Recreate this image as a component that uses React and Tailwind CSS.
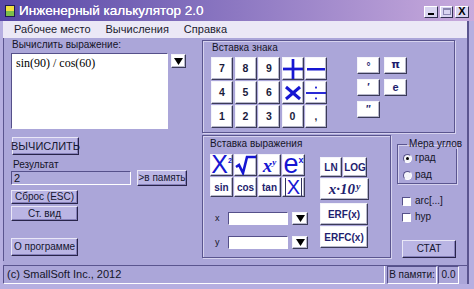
import React from "react";

const F = "font-['Liberation_Sans',Arial,sans-serif]";
const KEY =
  "flex items-center justify-center bg-white border border-t-[#f4f4fa] border-l-[#f4f4fa] border-r-[#3a3a58] border-b-[#3a3a58] shadow-[inset_-1px_-1px_0_#b8b8cc]";
const BTN =
  "flex items-center justify-center bg-[#bab5e4] border border-t-[#e9e7f7] border-l-[#e9e7f7] border-r-[#28244a] border-b-[#28244a] shadow-[inset_-1px_-1px_0_#8680ba] text-[10px] text-[#151530] leading-none";
const SUNK =
  "border border-t-[#55508a] border-l-[#55508a] border-r-white border-b-white";
const FRAME =
  "border border-[#5a558f] shadow-[inset_1px_1px_0_#d6d2ef,1px_1px_0_#d6d2ef]";
const BLUE = "#1616d2";
const NAVY = "text-[#1e1e6e]";

function Arrow({ cls }) {
  return (
    <div className={`${KEY} ${cls}`}>
      <svg width="9" height="7" viewBox="0 0 9 7">
        <polygon points="0,0 9,0 4.5,7" fill="#000" />
      </svg>
    </div>
  );
}

function Digit({ c }) {
  return (
    <div className={`${KEY} text-[10.5px] font-bold text-[#1a1a3c]`}>{c}</div>
  );
}

function OpPlus() {
  return (
    <div className={KEY}>
      <svg width="22" height="22" viewBox="0 0 22 22">
        <rect x="0" y="9.5" width="22" height="3" fill={BLUE} />
        <rect x="9.5" y="0" width="3" height="22" fill={BLUE} />
      </svg>
    </div>
  );
}
function OpMinus() {
  return (
    <div className={KEY}>
      <svg width="20" height="22" viewBox="0 0 20 22">
        <rect x="1" y="10" width="18" height="2.5" fill={BLUE} />
      </svg>
    </div>
  );
}
function OpMul() {
  return (
    <div className={KEY}>
      <svg width="20" height="20" viewBox="0 0 20 20">
        <line x1="3" y1="4" x2="17" y2="16" stroke={BLUE} strokeWidth="3" />
        <line x1="17" y1="4" x2="3" y2="16" stroke={BLUE} strokeWidth="3" />
      </svg>
    </div>
  );
}
function OpDiv() {
  return (
    <div className={KEY}>
      <svg width="22" height="22" viewBox="0 0 22 22">
        <rect x="0" y="10" width="22" height="2" fill={BLUE} />
        <rect x="10" y="4" width="2" height="2" fill={BLUE} />
        <rect x="10" y="16" width="2" height="2" fill={BLUE} />
      </svg>
    </div>
  );
}

function Small({ children, cls = "" }) {
  return (
    <div className={`${KEY} text-[10px] font-bold ${NAVY} ${cls}`}>
      {children}
    </div>
  );
}

export default function App() {
  return (
    <div
      className={`${F} w-[474px] h-[289px] flex flex-col bg-[#b6afe1] overflow-hidden select-none`}
    >
      {/* Title bar */}
      <div className="h-[21px] shrink-0 flex items-center pl-[5px] pr-[5px] bg-gradient-to-r from-[#5847a6] via-[#8d78c2] to-[#c9abdd]">
        <div className="w-[10px] h-[12px] border border-[#1c1c50] flex flex-col">
          <div className="h-[5px] bg-[#f0e040]" />
          <div className="flex-1 bg-[#7bbf4a]" />
        </div>
        <div className="ml-[4px] text-white text-[13.5px] leading-none [text-shadow:0_0_0.4px_#fff]">
          Инженерный калькулятор 2.0
        </div>
        <div className="ml-auto flex items-center gap-[2px] mt-[2px]">
          <div className="w-[14px] h-[12px] bg-[#d9d5f1] border border-t-white border-l-white border-r-[#303050] border-b-[#303050] flex items-end justify-center">
            <div className="w-[6px] h-[2px] bg-black mb-[2px]" />
          </div>
          <div className="w-[13px] h-[12px] bg-[#d9d5f1] border border-t-white border-l-white border-r-[#303050] border-b-[#303050] flex items-center justify-center">
            <div className="w-[8px] h-[7px] border border-[#8a86b0] border-t-2" />
          </div>
          <div className="w-[14px] h-[12px] bg-[#d9d5f1] border border-t-white border-l-white border-r-[#303050] border-b-[#303050] flex items-center justify-center text-[11px] font-bold leading-none text-black">
            X
          </div>
        </div>
      </div>

      {/* Client area */}
      <div className="flex-1 ml-[3px] mr-[5px] mb-[5px] flex flex-col bg-[#aba6d9] border-r-2 border-[#5a558f]">
        {/* Menu */}
        <div className="h-[17px] shrink-0 bg-[#ebe8f6] flex items-center text-[11px] text-[#1a1a2e] leading-none">
          <span className="ml-[11px]">Рабочее место</span>
          <span className="ml-[15px]">Вычисления</span>
          <span className="ml-[15px]">Справка</span>
        </div>

        {/* Body */}
        <div className="flex-1 flex">
          {/* Left column */}
          <div className="w-[199px] shrink-0 flex flex-col pl-[7px] border-l border-[#5a558f]">
            <div className="mt-[2px] h-[10px] text-[10px] leading-[10px] text-[#141428] ml-[1px]">
              Вычислить выражение:
            </div>
            <div className="mt-[3px] flex items-start">
              <div
                className={`w-[157px] h-[76px] bg-white ${SUNK} pl-[4px] pt-[2px] font-['Liberation_Serif',serif] text-[12px] text-black leading-[14px]`}
              >
                sin(90) / cos(60)
              </div>
              <Arrow cls="ml-[3px] mt-[1px] w-[15px] h-[14px]" />
            </div>
            <div
              className={`${BTN} mt-[8px] ml-[1px] w-[67px] h-[18px] text-[11px] border-l-[#28244a]`}
            >
              ВЫЧИСЛИТЬ
            </div>
            <div className="mt-[5px] ml-[2px] h-[10px] text-[10px] leading-[10px] text-[#141428]">
              Результат
            </div>
            <div className="mt-[1px] flex items-start">
              <div
                className={`w-[120px] h-[14px] bg-[#aeaadb] ${SUNK} pl-[2px] text-[11px] leading-[12px] text-[#101020]`}
              >
                2
              </div>
              <div className={`${BTN} ml-[6px] -mt-[1px] w-[50px] h-[16px] text-[9px]`}>
                &gt;в память
              </div>
            </div>
            <div className={`${BTN} mt-[4px] w-[67px] h-[14px] text-[9px]`}>
              Сброс (ESC)
            </div>
            <div className={`${BTN} mt-[2px] w-[67px] h-[15px] text-[9px]`}>
              Ст. вид
            </div>
            <div className={`${BTN} mt-[17px] w-[67px] h-[18px] text-[9px]`}>
              О программе
            </div>
          </div>

          {/* Right column */}
          <div className="flex-1 flex flex-col">
            {/* Вставка знака */}
            <div className={`${FRAME} mt-[2px] w-[253px] h-[93px] flex flex-col pl-[8px]`}>
              <div className="pt-[2px] pl-[1px] h-[12px] text-[10px] leading-[10px] text-[#141428]">
                Вставка знака
              </div>
              <div className="mt-[4px] flex items-start">
                <div className="grid grid-cols-[repeat(5,22px)] grid-rows-[repeat(3,23px)] gap-x-[1.5px] gap-y-[1px]">
                  <Digit c="7" />
                  <Digit c="8" />
                  <Digit c="9" />
                  <OpPlus />
                  <OpMinus />
                  <Digit c="4" />
                  <Digit c="5" />
                  <Digit c="6" />
                  <OpMul />
                  <OpDiv />
                  <Digit c="1" />
                  <Digit c="2" />
                  <Digit c="3" />
                  <Digit c="0" />
                  <div className={`${KEY} items-end pb-[3px] text-[10px] font-bold text-[#1a1a3c]`}>,</div>
                </div>
                <div className="ml-[30px] grid grid-cols-[repeat(2,23px)] grid-rows-[repeat(3,17px)] gap-x-[4px] gap-y-[5px]">
                  <Small cls="items-start pt-[1px]">°</Small>
                  <Small cls="text-[11px] font-['DejaVu_Sans',sans-serif]">π</Small>
                  <Small>′</Small>
                  <Small cls="text-[11px]">e</Small>
                  <Small>″</Small>
                </div>
              </div>
            </div>

            {/* Bottom row */}
            <div className="mt-[2px] flex items-start">
              {/* Вставка выражения */}
              <div className={`${FRAME} w-[189px] h-[123px] flex flex-col pl-[7px]`}>
                <div className="pt-[3px] h-[14px] text-[10px] leading-[10px] text-[#141428]">
                  Вставка выражения
                </div>
                <div className="flex items-start">
                  <div className="w-[110px] shrink-0 flex flex-col">
                    <div className="mt-[4px] grid grid-cols-[repeat(4,23px)] grid-rows-[22px_20px] gap-[1px]">
                      <div className={`${KEY} items-end`}>
                        <span className="text-[25px] leading-[22px] text-[#1616d2]">X</span>
                        <span className="text-[7px] font-bold text-[#1616d2] self-start mt-[1px]">2</span>
                      </div>
                      <div className={KEY}>
                        <svg width="21" height="20" viewBox="0 0 21 20">
                          <polyline
                            points="1,12 4,10 8,18 12,2 21,2"
                            fill="none"
                            stroke={BLUE}
                            strokeWidth="2.6"
                          />
                        </svg>
                      </div>
                      <div className={`${KEY} font-['Liberation_Serif',serif] italic font-bold text-[#1616d2]`}>
                        <span className="text-[19px] leading-none">x</span>
                        <span className="text-[9px] self-start mt-[1px]">y</span>
                      </div>
                      <div className={`${KEY}`}>
                        <span className="text-[27px] leading-[20px] text-[#1616d2] -mt-[3px]">e</span>
                        <span className="text-[9px] font-bold leading-none text-[#1616d2] self-start mt-[1px]">x</span>
                      </div>
                      <Small cls="text-[9px]">sin</Small>
                      <Small cls="text-[9px]">cos</Small>
                      <Small cls="text-[9px]">tan</Small>
                      <div className={KEY}>
                        <span className="border-l border-r border-[#303060] px-[1px] text-[20px] leading-[18px] text-[#1616d2]">
                          X
                        </span>
                      </div>
                    </div>
                    <div className="mt-[15px] flex items-center pl-[5px]">
                      <span className="w-[13px] text-[9px] leading-none text-[#141428]">x</span>
                      <div className={`w-[60px] h-[13px] bg-white ${SUNK}`} />
                      <Arrow cls="ml-[4px] w-[16px] h-[13px]" />
                    </div>
                    <div className="mt-[11px] flex items-center pl-[5px]">
                      <span className="w-[13px] text-[9px] leading-none text-[#141428]">y</span>
                      <div className={`w-[60px] h-[13px] bg-white ${SUNK}`} />
                      <Arrow cls="ml-[4px] w-[16px] h-[13px]" />
                    </div>
                  </div>
                  <div className="mt-[7px] flex flex-col">
                    <div className="flex gap-[1px]">
                      <Small cls="w-[22px] h-[20px] items-start pt-[2px]">LN</Small>
                      <Small cls="w-[24px] h-[20px] items-start pt-[2px]">LOG</Small>
                    </div>
                    <div className={`${KEY} mt-[1px] w-[49px] h-[22px] font-['Liberation_Serif',serif] italic font-bold ${NAVY}`}>
                      <span className="text-[15px] leading-none">x·10</span>
                      <span className="text-[10px] self-start ml-[1px]">y</span>
                    </div>
                    <Small cls="mt-[3px] w-[48px] h-[22px]">ERF(x)</Small>
                    <Small cls="mt-[1px] w-[48px] h-[22px]">ERFC(x)</Small>
                  </div>
                </div>
              </div>

              {/* Right side */}
              <div className="ml-[6px] w-[60px] flex flex-col">
                <fieldset className={`${FRAME} mt-[4px] h-[45px] pl-[5px] pt-[1px] min-w-0`}>
                  <legend className="ml-[4px] px-[2px] whitespace-nowrap text-[10px] leading-[10px] text-[#141428]">
                    Мера углов
                  </legend>
                  <div className="flex items-center h-[10px] mt-[3px]">
                    <div className={`w-[9px] h-[9px] rounded-full bg-[#f4f4fa] ${SUNK} flex items-center justify-center`}>
                      <div className="w-[3px] h-[3px] rounded-full bg-black" />
                    </div>
                    <span className="ml-[3px] text-[10px] leading-none text-[#141428]">град</span>
                  </div>
                  <div className="flex items-center h-[10px] mt-[7px]">
                    <div className={`w-[9px] h-[9px] rounded-full bg-[#f4f4fa] ${SUNK}`} />
                    <span className="ml-[3px] text-[10px] leading-none text-[#141428]">рад</span>
                  </div>
                </fieldset>
                <div className="mt-[12px] ml-[5px] flex items-center h-[10px]">
                  <div className={`w-[9px] h-[9px] bg-white ${SUNK}`} />
                  <span className="ml-[4px] text-[10px] leading-none text-[#141428]">arc[...]</span>
                </div>
                <div className="mt-[6px] ml-[5px] flex items-center h-[10px]">
                  <div className={`w-[9px] h-[9px] bg-white ${SUNK}`} />
                  <span className="ml-[4px] text-[10px] leading-none text-[#141428]">hyp</span>
                </div>
                <div className={`${BTN} mt-[18px] ml-[5px] w-[54px] h-[18px] text-[10px]`}>
                  СТАТ
                </div>
              </div>
            </div>
          </div>
        </div>

        {/* Status bar */}
        <div className="h-[19px] shrink-0 flex items-stretch text-[11px] leading-none text-[#141428] border-t border-[#5a558f] mt-[4px]">
          <div className={`flex-1 flex items-center pl-[3px] ${SUNK} border-t-0`}>
            (c) SmallSoft Inc., 2012
          </div>
          <div className={`ml-[2px] w-[50px] flex items-center justify-center text-[10px] ${SUNK}`}>
            В памяти:
          </div>
          <div className={`ml-[1px] w-[21px] flex items-center justify-center text-[10px] ${SUNK}`}>
            0.0
          </div>
          <div className="w-[8px]" />
        </div>
      </div>
    </div>
  );
}
